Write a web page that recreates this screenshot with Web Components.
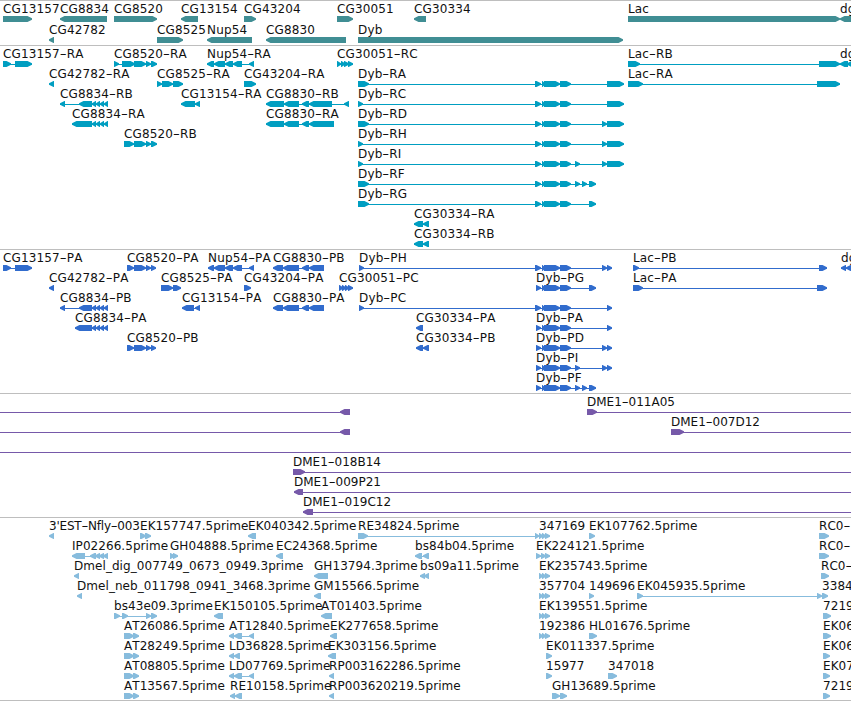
<!DOCTYPE html>
<html lang="en">
<head>
<meta charset="utf-8">
<title>Genome browser</title>
<style>
  body {
    margin: 0;
    background: #fff;
    overflow: hidden;
  }
</style>
</head>
<body>
<genome-browser></genome-browser>

<script>
// One line per row of a track. Features are separated by ";" and look like
// "label strand start-end start-end ...", "_" stands for no label.
// "~n" is the end of a line that has no box there.
// "label@n" sets the letter spacing of a label.
const DYB = '542-545 544-560 560-571';
const TAIL = '92-96 96-100 100-104 104-108';
const TRIO = '539-543 542-546 545-550';

const TRACKS = [
  {
    color: '#408e94', rowHeight: 21, pad: 1, spacing: 0.15,
    rows: [
      'CG13157 + 3-32; CG8834 - 60-107; CG8520 + 114-157; CG13154 - 181-198; CG43204 + 244-256; CG30051 + 337-353; CG30334 - 414-426; Lac + 628-840; dg - 840-860',
      'CG42782 - 49-54; CG8525 + 157-183; Nup54 - 207-252; CG8830 - 266-346; Dyb + 358-623'
    ]
  },
  {
    color: '#009ec1', rowHeight: 20, pad: 2, spacing: 0.15,
    rows: [
      'CG13157-RA + 3-11 15-32; CG8520-RA + 114-119 122-135 134-146 146-151 151-157; Nup54-RA - 207-214 214-225 225-233 233-242 249-254; CG30051-RC + 337-341 341-345 344-349 348-353; Lac-RB + 628-640 819-840; dg - 840-848 847-858',
      `CG42782-RA - 49-54; CG8525-RA + 157-162 162-173 173-183; CG43204-RA + 244-256; Dyb-RA + 358-369 535-541 ${DYB} 607-624; Lac-RA + 628-643 817-840`,
      `CG8834-RB - 60-65 79-92 ${TAIL}; CG13154-RA - 181-195 195-200; CG8830-RB - 266-284 284-299 302-309 309-332 344-349; Dyb-RC + 358-363 535-541 ${DYB} 607-624`,
      `CG8834-RA - 72-92 ${TAIL}; CG8830-RA - 266-284 284-299 302-309 309-334; Dyb-RD + 358-369 535-541 ${DYB} 602-607 607-624`,
      `CG8520-RB + 124-134 134-146 146-151 151-157; Dyb-RH + 358-363 535-541 ${DYB} 602-607 607-624`,
      `Dyb-RI + 358-363 535-541 ${DYB} 575-580 602-607 607-624`,
      `Dyb-RF + 358-369 535-541 ${DYB} 575-580 582-587 589-596`,
      `Dyb-RG + 358-369 535-541 ${DYB} 589-596`,
      'CG30334-RA - 414-423 423-429',
      'CG30334-RB - 414-423 423-429'
    ]
  },
  {
    color: '#316ccd', rowHeight: 20, pad: 2, spacing: 0.15,
    rows: [
      `CG13157-PA + 3-11 15-32; CG8520-PA + 127-134 134-146 146-151 151-156; Nup54-PA - 208-214 214-225 225-233 233-242 249-254; CG8830-PB - 273-283 283-299 302-309 309-324; Dyb-PH + 359-364 535-541 ${DYB} 602-607 607-612; Lac-PB + 633-639 819-827; dg - 841-846 846-852`,
      `CG42782-PA - 49-54; CG8525-PA + 161-173 173-181; CG43204-PA + 244-251; CG30051-PC + 339-343 342-346 345-349 348-353; Dyb-PG + 536-541 ${DYB} 589-596; Lac-PA + 633-643 817-827`,
      `CG8834-PB - 60-65 79-92 ${TAIL}; CG13154-PA - 182-194 195-200; CG8830-PA - 273-283 283-299 302-309 309-324; Dyb-PC + 359-364 535-541 ${DYB} 607-612`,
      `CG8834-PA - 75-92 ${TAIL}; CG30334-PA - 416-423; Dyb-PA + 536-541 ${DYB} 607-612`,
      `CG8520-PB + 127-134 134-146 146-151 151-156; CG30334-PB - 416-423 423-429; Dyb-PD + 536-541 ${DYB} 602-607 607-612`,
      `Dyb-PI + 536-541 ${DYB} 575-580 602-607 607-612`,
      `Dyb-PF + 536-541 ${DYB} 575-580 582-587 589-596`
    ]
  },
  {
    color: '#7659a9', rowHeight: 20, pad: 2, spacing: 0,
    rows: [
      '_ - ~0 340-350; DME1-011A05 + 587-597 ~851',
      '_ - ~0 340-350; DME1-007D12 + 671-684 ~851',
      '_ + ~0 ~851',
      'DME1-018B14 + 293-305 ~851',
      'DME1-009P21 - 294-303 ~851',
      'DME1-019C12 - 303-313 ~851'
    ]
  },
  {
    color: '#87bcdd', rowHeight: 20, pad: 1, spacing: 0.06,
    rows: [
      `3'EST-Nfly-003@-0.2 - 49-54; EK157747.5prime + 140-146 145-151; EK040342.5prime - 248-256; RE34824.5prime + 358-368 535-539; 347169 + ${TRIO}; EK107762.5prime + 589-595; RC0- + 819-829`,
      'IP02266.5prime - 72-85 90-96 95-100 99-104 103-108; GH04888.5prime + 170-175 173-178; EC24368.5prime - 276-283; bs84b04.5prime - 415-422 423-429; EK224121.5prime + 536-541 541-546 545-550; RC0- + 819-829',
      `Dmel_dig_007749_0673_0949.3prime - 74-79; GH13794.3prime - 314-328; bs09a11.5prime - 420-425 424-429; EK235743.5prime + ${TRIO}; RC0- + 821-829`,
      `Dmel_neb_011798_0941_3468.3prime - 77-82; GM15566.5prime - 314-321; 357704 + ${TRIO}; 149696 + 589-594; EK045935.5prime + 637-643 817-822; 3384 + 822-828`,
      `bs43e09.3prime + 114-120 122-128 146-151 151-157; EK150105.5prime - 214-223; AT01403.5prime - 321-332; EK139551.5prime + ${TRIO}; 7219 + 823-831`,
      `AT26086.5prime + 124-134 133-139; AT12840.5prime - 229-234 234-242 249-254; EK277658.5prime - 330-337; 192386 + ${TRIO}; HL01676.5prime + 589-597; EK06 + 823-831`,
      'AT28249.5prime + 124-134 133-139; LD36828.5prime - 229-234 234-240; EK303156.5prime - 328-336; EK011337.5prime + 546-552; EK06 + 823-830',
      'AT08805.5prime + 124-134 133-139; LD07769.5prime - 229-234 234-242 249-254; RP003162286.5prime - 329-334; 15977 + 546-552; 347018 + 608-617; EK07 + 823-830',
      'AT13567.5prime + 124-134 133-139; RE10158.5prime - 230-235 235-242; RP003620219.5prime - 329-334; GH13689.5prime + 552-560 560-567; 7219 + 823-830'
    ]
  }
];

class GenomeFeature extends HTMLElement {
  constructor() {
    super();
    this.root = this.attachShadow({ mode: 'open' });
  }

  set feature(text) {
    const [name, strand, ...parts] = text.trim().split(' ');
    const [label, spacing] = name.split('@');
    const boxes = parts.filter(p => p[0] !== '~').map(p => p.split('-').map(Number));
    const points = boxes.flat().concat(parts.filter(p => p[0] === '~').map(p => Number(p.slice(1))));
    const start = Math.min(...points);
    const width = Math.max(...points) - start;
    this.style.left = start + 'px';
    if (spacing) {
      this.style.setProperty('--label-spacing', spacing + 'px');
    }

    const shapes = boxes.map(([from, to]) => {
      const a = from - start;
      const b = to - start;
      const tip = Math.min(to - from, 5);
      return strand === '+'
        ? `<polygon points="${a},0 ${b - tip + 0.5},0 ${b},2.3 ${b},3.7 ${b - tip + 0.5},6 ${a},6"/>`
        : `<polygon points="${b},0 ${a + tip - 0.5},0 ${a},2.3 ${a},3.7 ${a + tip - 0.5},6 ${b},6"/>`;
    }).join('');
    const line = boxes.length === 1 && points.length === 2 ? '' : `<rect x="0" y="3" width="${width}" height="1"/>`;

    this.root.innerHTML = `
      <style>
        :host {
          position: absolute;
          top: 0;
          display: block;
        }
        .label {
          height: 14px;
          line-height: 14px;
          white-space: nowrap;
          letter-spacing: var(--label-spacing);
        }
        .dash {
          padding: 0 1.2px;
          text-shadow: -1px 0 currentColor, 1px 0 currentColor;
        }
        svg {
          display: block;
          fill: var(--track-color);
        }
      </style>
      <div class="label">${label === '_' ? '' : label.replace(/-/g, '<span class="dash">-</span>')}</div>
      <svg width="${width}" height="6">${line}${shapes}</svg>`;
  }
}

class TrackRow extends HTMLElement {
  constructor() {
    super();
    this.root = this.attachShadow({ mode: 'open' });
    this.root.innerHTML = `
      <style>
        :host {
          display: block;
          position: relative;
          height: var(--row-height);
        }
      </style>
      <slot></slot>`;
  }
}

class GenomeTrack extends HTMLElement {
  constructor() {
    super();
    this.root = this.attachShadow({ mode: 'open' });
    this.root.innerHTML = `
      <style>
        :host {
          display: block;
          border-top: 1px solid #bebebe;
          padding: 1px 0 var(--track-pad);
        }
      </style>
      <slot></slot>`;
  }

  set track(track) {
    this.style.setProperty('--track-color', track.color);
    this.style.setProperty('--row-height', track.rowHeight + 'px');
    this.style.setProperty('--track-pad', track.pad + 'px');
    this.style.setProperty('--label-spacing', track.spacing + 'px');
    track.rows.forEach(text => {
      const row = document.createElement('track-row');
      text.split(';').forEach(item => {
        const feature = document.createElement('genome-feature');
        feature.feature = item;
        row.appendChild(feature);
      });
      this.appendChild(row);
    });
  }
}

class GenomeBrowser extends HTMLElement {
  constructor() {
    super();
    this.root = this.attachShadow({ mode: 'open' });
  }

  connectedCallback() {
    this.root.innerHTML = `
      <style>
        :host {
          display: flex;
          flex-direction: column;
          width: 851px;
          overflow: hidden;
          border-bottom: 1px solid #bebebe;
          background: #fff;
          color: #111;
          font: 12px "DejaVu Sans", sans-serif;
          font-kerning: none;
          font-variant-ligatures: none;
        }
      </style>`;
    TRACKS.forEach(data => {
      const track = document.createElement('genome-track');
      track.track = data;
      this.root.appendChild(track);
    });
  }
}

customElements.define('genome-feature', GenomeFeature);
customElements.define('track-row', TrackRow);
customElements.define('genome-track', GenomeTrack);
customElements.define('genome-browser', GenomeBrowser);
</script>
</body>
</html>
